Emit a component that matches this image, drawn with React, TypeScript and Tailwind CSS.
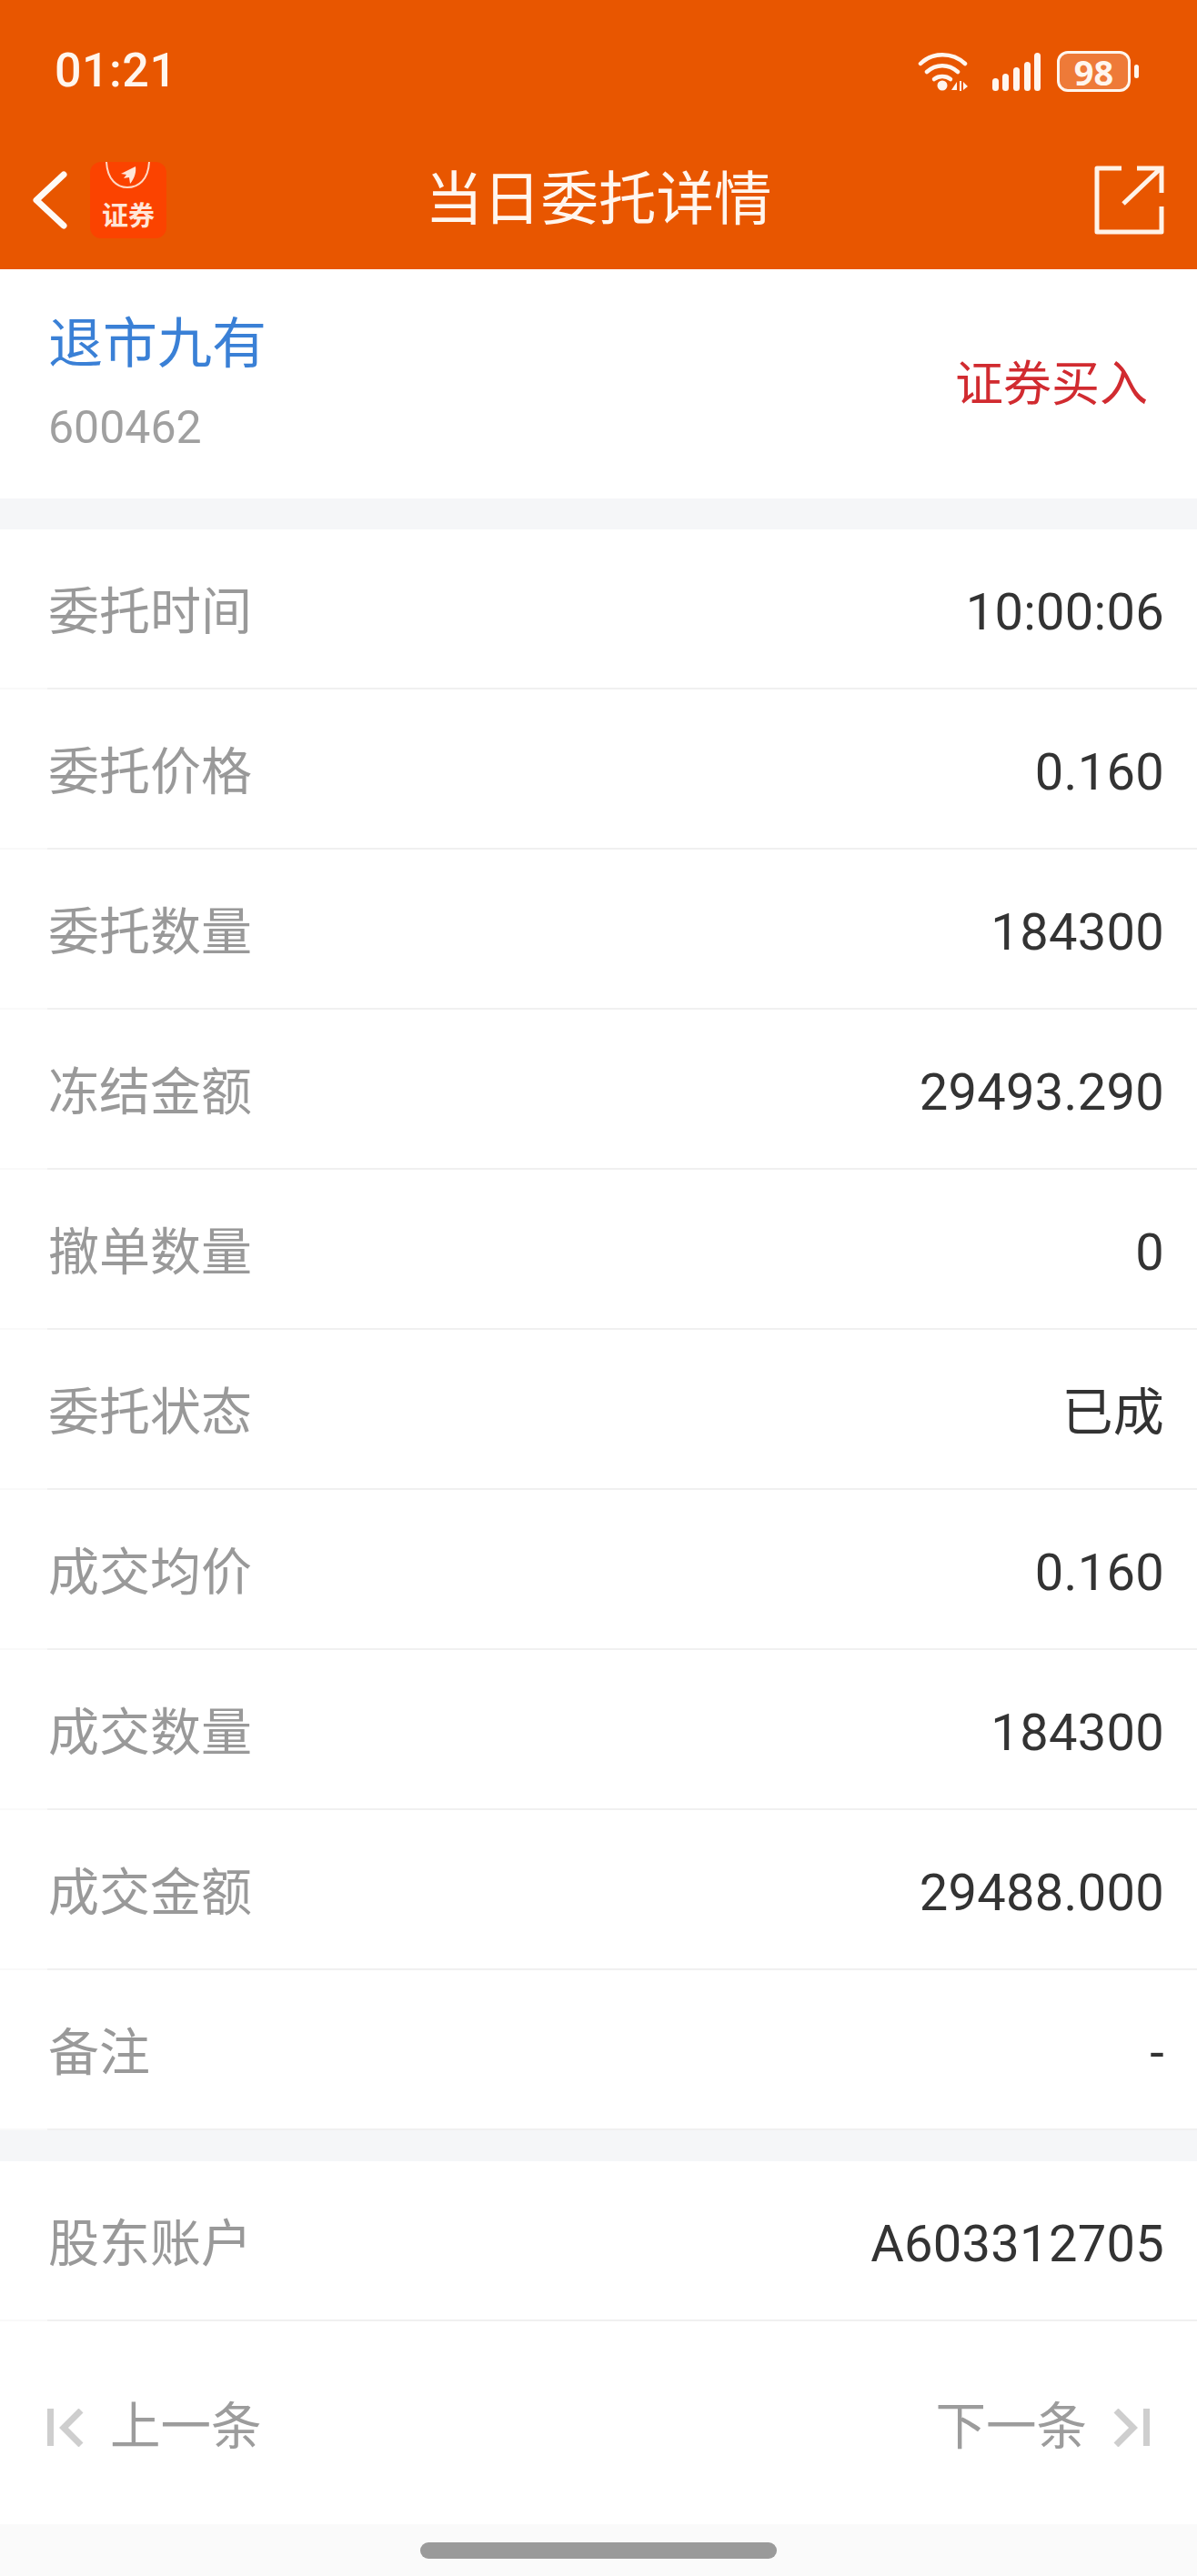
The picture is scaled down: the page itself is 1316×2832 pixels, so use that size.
import React from "react";

const FONT = "font-['Roboto','Noto_Sans_CJK_SC',sans-serif]";

const rowsA: [string, string][] = [
  ["委托时间", "10:00:06"],
  ["委托价格", "0.160"],
  ["委托数量", "184300"],
  ["冻结金额", "29493.290"],
  ["撤单数量", "0"],
  ["委托状态", "已成"],
  ["成交均价", "0.160"],
  ["成交数量", "184300"],
  ["成交金额", "29488.000"],
  ["备注", "-"],
];

function Row({ label, value }: { label: string; value: string }) {
  return (
    <div className="relative flex h-[176px] items-center justify-between pb-[1px] pl-[53px] pr-[36px] pt-[7px]">
      <span className="text-[56px] leading-none text-[#999999]">{label}</span>
      <span className="text-[56px] leading-none tracking-[0.3px] text-[#333333]">{value}</span>
      <div className="absolute bottom-0 left-0 h-[2px] w-full bg-[#f9f9f9]" />
      <div className="absolute bottom-0 left-[52px] right-0 h-[2px] bg-[#f0f0f0]" />
    </div>
  );
}

function Wifi() {
  return (
    <svg width="56" height="44" viewBox="0 0 56 44" fill="none" className="text-[#fff6ee]">
      <path d="M3 13 C 16 0, 38 0, 52 13" stroke="currentColor" strokeWidth="4.5" strokeLinecap="round" />
      <path d="M10 22 C 20 13, 34 13, 44 22" stroke="currentColor" strokeWidth="4.5" strokeLinecap="round" />
      <path d="M18 30 C 23 26, 31 26, 36 30" stroke="currentColor" strokeWidth="4.5" strokeLinecap="round" />
      <circle cx="27" cy="37" r="5.5" fill="currentColor" />
      <path d="M43 33 L43 42 L37 42 Z M46 32 h2 v11 h-2 Z M50 33 L55 38 L50 42 Z" fill="currentColor" />
    </svg>
  );
}

function Signal() {
  return (
    <svg width="54" height="44" viewBox="0 0 54 44" fill="currentColor" className="text-[#fff6ee]">
      <rect x="0" y="29" width="7" height="14" rx="3.5" />
      <rect x="11" y="24" width="7" height="19" rx="3.5" />
      <rect x="23" y="17" width="7" height="26" rx="3.5" />
      <rect x="35" y="11" width="7" height="32" rx="3.5" />
      <rect x="46" y="1" width="7" height="42" rx="3.5" />
    </svg>
  );
}

function Battery() {
  return (
    <div className="flex items-center gap-[4px]">
      <div className="flex h-[45px] w-[81px] items-center justify-center rounded-[12px] border-[3px] border-[#fff6ee] bg-[#ee7a38] font-['Open_Sans',sans-serif] text-[38px] font-bold leading-none text-[#fff6ee]">
        98
      </div>
      <div className="h-[15px] w-[5px] rounded-full bg-[#fff6ee]" />
    </div>
  );
}

function Logo() {
  return (
    <div className="relative flex h-[84px] w-[84px] flex-col items-center justify-end overflow-hidden rounded-[12px] bg-[#fb4300] pb-[9px]">
      <svg width="52" height="34" viewBox="0 0 52 34" fill="none" className="absolute left-[16px] top-0">
        <path d="M2 0 C 3 20, 14 28, 25 28 C 37 28, 48 20, 49 0" stroke="#ffd9c4" strokeWidth="2" />
        <path d="M34 5 L18 13 L24 14 L21 18 L27 17 L28 24 C 33 18, 35 11, 34 5 Z" fill="#ffe6d8" />
      </svg>
      <span className="text-[29px] font-bold leading-none text-[#ffe6d8]">证券</span>
    </div>
  );
}

export default function App() {
  return (
    <div className={`flex h-[2832px] w-[1316px] flex-col bg-white ${FONT}`}>
      <header className="flex h-[296px] flex-col bg-[#e85600] text-white">
        <div className="flex h-[148px] items-start justify-between pl-[60px] pr-[64px] pt-[54px]">
          <span className="text-[52px] font-medium leading-[48px] tracking-[0.5px] text-[#fff6ee]">01:21</span>
          <div className="flex items-center gap-[26px] pt-[2px]">
            <Wifi />
            <div className="flex items-center gap-[17px]">
              <Signal />
              <Battery />
            </div>
          </div>
        </div>
        <div className="relative flex h-[148px] items-center justify-between pb-[4px] pl-[34px] pr-[36px]">
          <div className="flex items-center gap-[23px]">
            <svg width="42" height="66" viewBox="0 0 42 66" fill="none">
              <path d="M36 5 L6 33 L36 61" stroke="#fffaf5" strokeWidth="7" strokeLinecap="round" strokeLinejoin="round" />
            </svg>
            <Logo />
          </div>
          <div className="absolute left-0 right-0 top-[40px] text-center text-[63.5px] leading-none text-[#fff6ee]">
            当日委托详情
          </div>
          <svg width="78" height="78" viewBox="0 0 78 78" fill="none">
            <path d="M31 4 H4 V74 H75 V46" stroke="#fff3e8" strokeWidth="5" strokeLinejoin="round" />
            <path d="M33 43 L73 5 M48 4 H75 V31" stroke="#fff3e8" strokeWidth="5" />
          </svg>
        </div>
      </header>

      <section className="flex h-[252px] items-center justify-between pl-[53px] pr-[54px]">
        <div className="flex flex-col">
          <span className="text-[60px] leading-none text-[#3a80d6]">退市九有</span>
          <span className="mt-[36px] text-[50px] leading-none text-[#a0a0a0]">600462</span>
        </div>
        <span className="mt-[2px] text-[53px] leading-none text-[#d12b30]">证券买入</span>
      </section>

      <div className="h-[34px] bg-[#f5f6f8]" />

      <section>
        {rowsA.map(([l, v]) => (
          <Row key={l} label={l} value={v} />
        ))}
      </section>

      <div className="h-[34px] bg-[#f5f6f8]" />

      <Row label="股东账户" value="A603312705" />

      <nav className="flex h-[223px] items-center justify-between pl-[52px] pr-[52px] pt-[10px]">
        <div className="flex items-center gap-[29px]">
          <svg width="40" height="42" viewBox="0 0 40 42" fill="none" stroke="#cecece" strokeWidth="7">
            <path d="M3.5 0 V41" />
            <path d="M37 2 L18 21 L37 40" />
          </svg>
          <span className="text-[55.5px] leading-none text-[#9c9c9c]">上一条</span>
        </div>
        <div className="flex items-center gap-[29px]">
          <span className="text-[55.5px] leading-none text-[#9c9c9c]">下一条</span>
          <svg width="40" height="42" viewBox="0 0 40 42" fill="none" stroke="#cecece" strokeWidth="7">
            <path d="M36.5 0 V41" />
            <path d="M3 2 L22 21 L3 40" />
          </svg>
        </div>
      </nav>

      <footer className="flex flex-1 items-start justify-center bg-[#fafafa] pt-[20px]">
        <div className="h-[18px] w-[392px] rounded-full bg-[#9a9a9a]" />
      </footer>
    </div>
  );
}
